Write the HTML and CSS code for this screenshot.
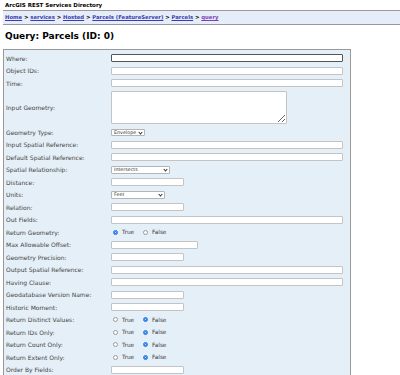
FILE: index.html
```
<!DOCTYPE html>
<html lang="en">
<head>
    <meta charset="UTF-8">
    <title>Query: Parcels (ID: 0)</title>
    <link rel="stylesheet" href="styles.css">
</head>
<body>
    <div class="top">ArcGIS REST Services Directory</div>
    <div class="nav">
        <a href="#">Home</a> &gt; <a href="#">services</a> &gt; <a href="#">Hosted</a> &gt; <a href="#">Parcels (FeatureServer)</a> &gt; <a href="#">Parcels</a> &gt; <a href="#" class="cur">query</a>
    </div>
    <h2>Query: Parcels (ID: 0)</h2>

    <div class="form">
        <div class="row"><label>Where:</label><input class="wide focus" type="text"></div>
        <div class="row"><label>Object IDs:</label><input class="wide" type="text"></div>
        <div class="row"><label>Time:</label><input class="wide" type="text"></div>
        <div class="row tall"><label>Input Geometry:</label><textarea></textarea></div>
        <div class="row"><label>Geometry Type:</label><span class="sel s-geom">Envelope</span></div>
        <div class="row"><label>Input Spatial Reference:</label><input class="wide" type="text"></div>
        <div class="row"><label>Default Spatial Reference:</label><input class="wide" type="text"></div>
        <div class="row"><label>Spatial Relationship:</label><span class="sel s-rel">Intersects</span></div>
        <div class="row"><label>Distance:</label><input class="short" type="text"></div>
        <div class="row"><label>Units:</label><span class="sel s-units">Feet</span></div>
        <div class="row"><label>Relation:</label><input class="short" type="text"></div>
        <div class="row"><label>Out Fields:</label><input class="wide" type="text"></div>
        <div class="row"><label>Return Geometry:</label><span class="radios"><i class="on"></i>True<i></i>False</span></div>
        <div class="row"><label>Max Allowable Offset:</label><input class="mid" type="text"></div>
        <div class="row"><label>Geometry Precision:</label><input class="short" type="text"></div>
        <div class="row"><label>Output Spatial Reference:</label><input class="wide" type="text"></div>
        <div class="row"><label>Having Clause:</label><input class="wide" type="text"></div>
        <div class="row"><label>Geodatabase Version Name:</label><input class="short" type="text"></div>
        <div class="row"><label>Historic Moment:</label><input class="short" type="text"></div>
        <div class="row"><label>Return Distinct Values:</label><span class="radios"><i></i>True<i class="on"></i>False</span></div>
        <div class="row"><label>Return IDs Only:</label><span class="radios"><i></i>True<i class="on"></i>False</span></div>
        <div class="row"><label>Return Count Only:</label><span class="radios"><i></i>True<i class="on"></i>False</span></div>
        <div class="row"><label>Return Extent Only:</label><span class="radios"><i></i>True<i class="on"></i>False</span></div>
        <div class="row"><label>Order By Fields:</label><input class="short" type="text"></div>
    </div>
</body>
</html>
```

FILE: styles.css
```
body { margin: 0; padding-left: 3px; font-family: "DejaVu Sans", Verdana, sans-serif; color: #000; background: #fff; }
.top { font-size: 5.5px; font-weight: bold; padding: 2px 0 0 2px; height: 8px; line-height: 7px; }
.nav { border-top: 1px solid #999; border-bottom: 1px solid #999; background: #e5eef8; height: 13px; line-height: 13px; padding-left: 2px; font-size: 5.3px; font-weight: bold; color: #000; }
.nav a { color: #3b3bb0; text-decoration: underline; }
.nav a.cur { color: #7a3fb5; }
h2 { font-size: 9px; margin: 6px 0 0 2px; height: 11px; line-height: 11px; }
.form { margin-top: 7px; width: 346px; border: 1px solid #999; background: #e5eff8; padding-top: 2px; }
.row { display: flex; align-items: center; height: 12.5px; }
.row.tall { height: 36.5px; }
label { width: 105px; padding-left: 2px; font-size: 6px; color: #444; }
input { box-sizing: border-box; height: 8px; margin: 0; padding: 0; border: 1px solid #c4c4c4; border-radius: 1px; background: #fff; }
input.wide { width: 232px; }
input.mid { width: 87px; }
input.short { width: 73px; }
input.focus { border-color: #555; }
textarea { box-sizing: border-box; width: 176px; height: 33px; margin: 0; padding: 0; border: 1px solid #c4c4c4; border-radius: 1px; background: #fff; resize: both; }
.sel { box-sizing: border-box; position: relative; height: 7.5px; line-height: 5.5px; padding-left: 2px; border: 1px solid #b5b5b5; border-radius: 1px; background: #fff; font-size: 4.8px; color: #333; }
.sel::after { content: ""; position: absolute; right: 2px; top: 1px; width: 2px; height: 2px; border-right: 1px solid #333; border-bottom: 1px solid #333; transform: rotate(45deg); }
.s-geom { width: 34px; }
.s-rel { width: 59px; }
.s-units { width: 54px; }
.radios { display: flex; align-items: center; font-size: 5.7px; color: #333; padding-left: 2px; }
.radios i { box-sizing: border-box; width: 5px; height: 5px; border: 1px solid #999; border-radius: 50%; background: #fff; margin-right: 4px; }
.radios i:nth-child(2) { margin-left: 9px; }
.radios i.on { border: 1.5px solid #1a73e8; background: #fff; box-shadow: inset 0 0 0 1px #1a73e8; }
```
